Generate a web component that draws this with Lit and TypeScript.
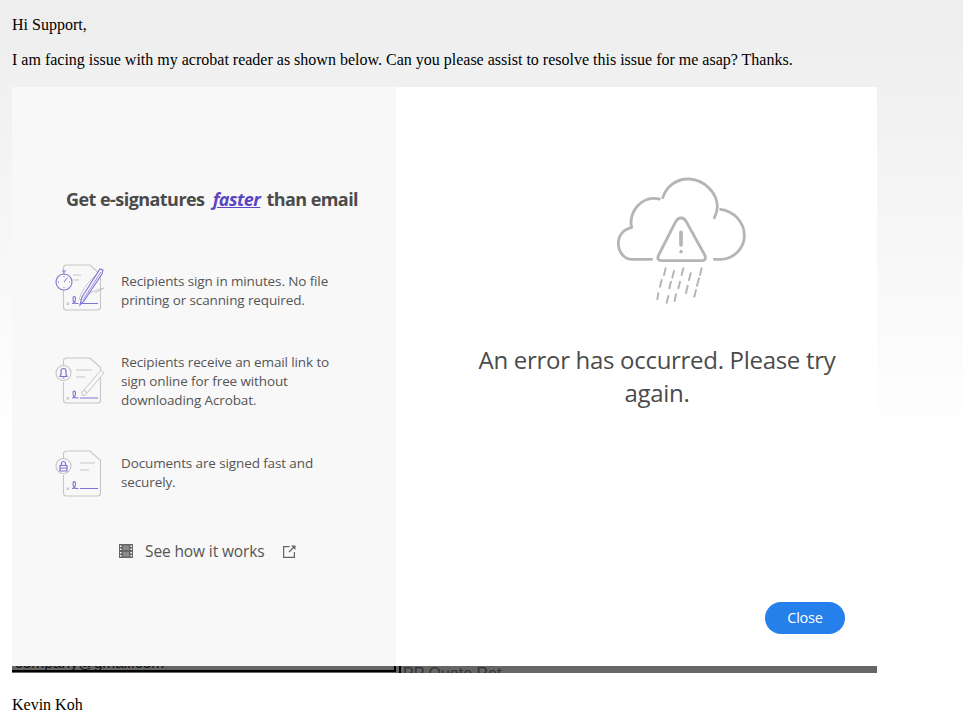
import { LitElement, html, css, svg } from "lit";
import { customElement } from "lit/decorators.js";

const doc = svg`<path d="M8.500 12V6a3 3 0 0 1 3-3H35l10.500 9.500V45a3 3 0 0 1-3 3h-31a3 3 0 0 1-3-3V27" fill="none" stroke="#c6c6c6" stroke-width="1.100"/>`;
const sig = (dy: number) => svg`<g transform="translate(0 ${dy})"><path d="M17 41.500c2.500 0 3.500-1.500 3.500-5 0-2.500-2.500-2.500-2.500 0 0 3.500 1 5 3.500 5h2M25 41.500h18" fill="none" stroke="#7d74d8" stroke-width="1.100"/><path d="M11.500 40.500l2.500 2.500m0-2.500l-2.500 2.500" stroke="#aaa" stroke-width=".8"/></g>`;
const rain = [
  [197, 310, 192, 330], [222, 318, 217, 338], [250, 310, 245, 330], [272, 325, 267, 345], [305, 310, 300, 330],
  [185, 345, 180, 365], [213, 350, 208, 370], [240, 350, 235, 370], [297, 340, 291, 362], [263, 362, 258, 384],
  [175, 385, 172, 402], [205, 393, 200, 413], [228, 388, 224, 408], [288, 375, 283, 395],
];

@customElement("app-root")
export class AppRoot extends LitElement {
  static styles = css`
    :host { display: block; height: 714px; overflow: hidden; box-sizing: border-box; padding: 0 12px;
      background: linear-gradient(#eeeeee 20px, #ffffff 440px);
      font-family: "Liberation Serif", serif; font-size: 16px; color: #000; }
    p { margin: 0; line-height: 18px; }
    .greet { padding-top: 16px; }
    .ask { padding-top: 17px; }
    .shot { margin-top: 18px; width: 865px; height: 586px; background: #666; overflow: hidden;
      font-family: "Open Sans", sans-serif; color: #4b4b4b; }
    .modal { display: grid; grid-template-columns: 384px 481px; height: 579px; }
    .left { background: #f8f8f8; display: flex; flex-direction: column; box-sizing: border-box; padding: 100px 30px 0 43px; }
    .title { margin: 0 0 0 11px; font-size: 18px; line-height: 24px; font-weight: 700; color: #4b4b4b; white-space: nowrap; letter-spacing: -0.55px; }
    .title a { color: #5a45c2; font-style: italic; text-decoration: underline; margin: 0 2px 0 4px; }
    .row { display: flex; align-items: center; gap: 16px; font-size: 13.5px; line-height: 19px; color: #555; letter-spacing: -0.12px; }
    .row svg { flex: none; width: 50px; height: 50px; }
    .r1 { margin-top: 58px; }
    .r1 svg { margin-top: -7px; }
    .r2 { margin-top: 41px; }
    .r2 svg { margin-top: -4px; }
    .r3 { margin-top: 38px; }
    .see { display: flex; align-items: center; margin: 43px 0 0 64px; font-size: 15.5px; line-height: 20px; color: #555; letter-spacing: -0.12px; }
    .see svg { flex: none; }
    .see span { margin: 0 18px 0 12px; }
    .right { background: #fff; display: flex; flex-direction: column; align-items: flex-start; position: relative; }
    .cloud { margin: 78px 0 0 204px; width: 160px; height: 150px; flex: none; }
    .msg { margin: 28px 0 0 61px; width: 400px; text-align: center; font-size: 24px; line-height: 33px; font-weight: 400; color: #4b4b4b; letter-spacing: -0.3px; }
    .close { position: absolute; left: 369px; top: 515px; width: 80px; height: 32px; border: 0; border-radius: 16px; background: #2680eb; color: #fff;
      font: 14.5px/32px "Open Sans", sans-serif; padding: 0; letter-spacing: -0.2px; }
    .under { height: 7px; display: grid; grid-template-columns: 384px 481px; grid-template-rows: 7px; overflow: hidden; font: 15.5px/14px "Liberation Sans", sans-serif; color: #111; }
    .u1 { height: 6px; overflow: hidden; border-bottom: 2px solid #000; border-right: 2px solid #000; box-sizing: border-box; padding-left: 3px; }
    .u1 span { display: block; margin-top: -10px; }
    .u2 { border-left: 2px solid #000; margin-left: 3px; padding-left: 2px; line-height: 16px; font-size: 16px; overflow: hidden; color: #333; }
    .u2 span { display: block; }
    .sign { margin-top: 23px; }
  `;

  render() {
    return html`
      <p class="greet">Hi Support,</p>
      <p class="ask">I am facing issue with my acrobat reader as shown below. Can you please assist to resolve this issue for me asap? Thanks.</p>
      <div class="shot">
        <div class="modal">
          <div class="left">
            <h2 class="title">Get e-signatures <a>faster</a> than email</h2>
            <div class="row r1">
              <svg viewBox="0 0 50 50">
                ${doc}${sig(0)}
                <circle cx="9" cy="20" r="8" fill="#f8f8f8" stroke="#7d74d8" stroke-width="1.100"/>
                <path d="M9 12V9.500M7 9h4M9 20l3.500-4.500M9 14v1M9 25v1M3 20h1M14 20h1" stroke="#7d74d8" fill="none"/>
                <path d="M18 13h8M18 18h6" stroke="#c6c6c6"/>
                <path d="M24 38c3-10 8-18 24-31M25 38c8-7 16-10 24-12-3 2-6 3-9 5" fill="none" stroke="#c6c6c6"/>
                <path d="M25 43l2-8L45 7l3 1-1 4-18 27z" fill="#f8f8f8" stroke="#7d74d8" stroke-width="1.100"/>
                <path d="M28 38L46 10" stroke="#7d74d8" stroke-width=".8"/>
              </svg>
              <div>Recipients sign in minutes. No file<br />printing or scanning required.</div>
            </div>
            <div class="row r2">
              <svg viewBox="0 0 50 50">
                ${doc}${sig(1.5)}
                <circle cx="8.500" cy="18" r="7.500" fill="#f8f8f8" stroke="#c6c6c6" stroke-width="1.100"/>
                <path d="M5 21.500h7l-1-2v-3.500a2.500 2.500 0 0 0-5 0v3.500zM7.500 23h2" fill="none" stroke="#7d74d8" stroke-width="1.200"/>
                <path d="M21 15h16M21 22h9" stroke="#c6c6c6"/>
                <path d="M29 35l3 3L49 18l-3-3z" fill="#f8f8f8" stroke="#c6c6c6"/>
                <circle cx="29" cy="38" r="2.500" fill="#f8f8f8" stroke="#c6c6c6"/>
              </svg>
              <div>Recipients receive an email link to<br />sign online for free without<br />downloading Acrobat.</div>
            </div>
            <div class="row r3">
              <svg viewBox="0 0 50 50">
                ${doc}${sig(-1)}
                <circle cx="8.500" cy="18" r="7.500" fill="#f8f8f8" stroke="#c6c6c6" stroke-width="1.100"/>
                <path d="M5 17.500h7v5.500H5zM6.500 17.500v-2a2 2 0 0 1 4 0v2M5 20h7" fill="none" stroke="#7d74d8" stroke-width="1.200"/>
                <path d="M25 15h15M25 22h9" stroke="#c6c6c6"/>
              </svg>
              <div>Documents are signed fast and<br />securely.</div>
            </div>
            <div class="see">
              <svg width="14" height="14" viewBox="0 0 14 14"><path fill="#666" d="M0 0h14v14H0z"/><path fill="#f8f8f8" d="M1 1.500h1.500v1.500H1zM1 4.500h1.500V6H1zM1 8h1.500v1.500H1zM1 11h1.500v1.500H1zM11.500 1.500H13V3h-1.500zM11.500 4.500H13V6h-1.500zM11.500 8H13v1.500h-1.500zM11.500 11H13v1.500h-1.500z"/><path fill="#8a8a8a" d="M4 1.500h6v4.500H4zM4 8h6v4.500H4z"/></svg>
              <span>See how it works</span>
              <svg width="13" height="13" viewBox="0 0 13 13" fill="none" stroke="#666" stroke-width="1.200"><path d="M6.500 1.600H.6v10.800h10.800V7"/><path d="M6 7l5.500-5.500"/><path fill="#666" stroke="none" d="M8 .6h4.500V5z"/></svg>
            </div>
          </div>
          <div class="right">
            <svg class="cloud" viewBox="0 0 480 450" fill="none" stroke="#b5b5b5" stroke-width="8.500" stroke-linecap="round" stroke-linejoin="round">
              <path d="M155 283H95C70 283 55 258 55 235 55 210 72 192 95 188 88 160 100 130 125 112 140 101 160 98 178 102"/>
              <path d="M188 98C200 65 228 40 268 42 315 45 352 85 352 125 352 135 348 148 343 158"/>
              <path d="M362 133C400 138 433 170 433 212 433 252 398 283 362 283H343"/>
              <path d="M243 159Q232 159 226 172L176 270C170 282 176 287 186 287H304C314 287 320 282 314 270L260 172Q254 159 243 159Z"/>
              <path d="M243 202V240" stroke-width="11"/>
              <circle cx="243" cy="260" r="4" fill="#b5b5b5" stroke-width="3"/>
              ${rain.map(([a, b, c, d]) => svg`<line x1=${a} y1=${b} x2=${c} y2=${d} stroke-width="6"/>`)}
            </svg>
            <h1 class="msg">An error has occurred. Please try again.</h1>
            <button class="close">Close</button>
          </div>
        </div>
        <div class="under">
          <div class="u1"><span>company@gmail.com</span></div>
          <div class="u2"><span>PP Quote Ret</span></div>
        </div>
      </div>
      <p class="sign">Kevin Koh</p>
    `;
  }
}
